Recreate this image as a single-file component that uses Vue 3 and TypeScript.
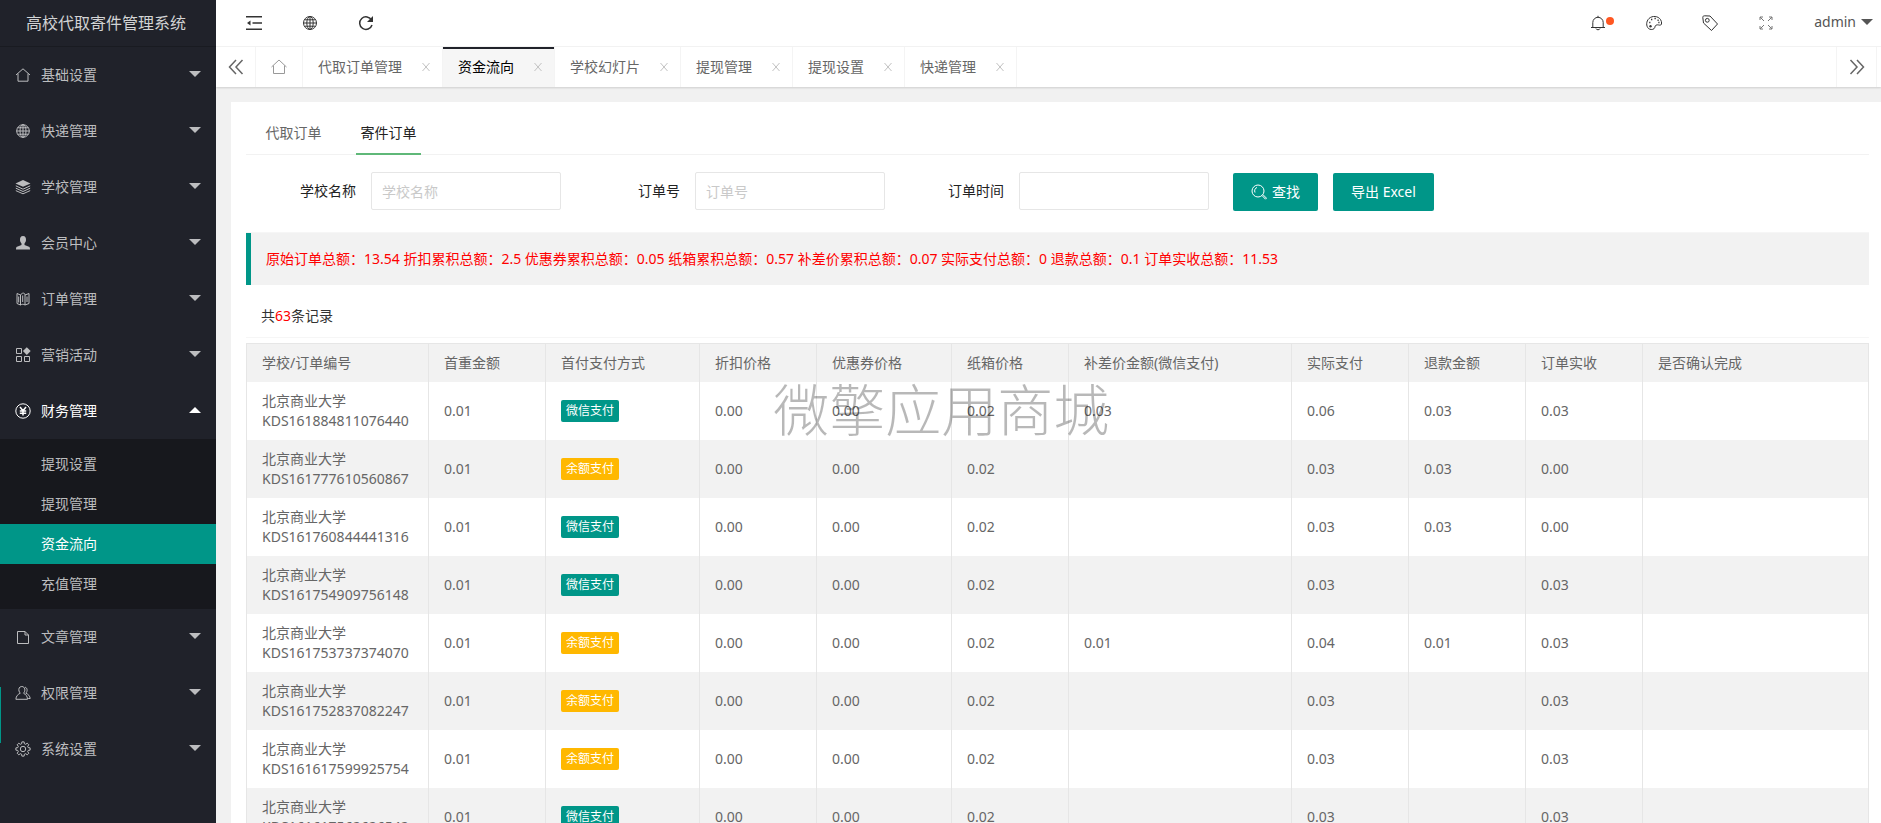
<script setup lang="ts">
import { ref } from 'vue'

interface MenuItem {
  title: string
  icon: string
  children?: string[]
}

interface Order {
  no: string
  pay: 'wechat' | 'balance'
  extra: string
  paid: string
  refund: string
  income: string
}

const menu: MenuItem[] = [
  { title: '基础设置', icon: 'home' },
  { title: '快递管理', icon: 'globe' },
  { title: '学校管理', icon: 'layers' },
  { title: '会员中心', icon: 'user' },
  { title: '订单管理', icon: 'map' },
  { title: '营销活动', icon: 'apps' },
  { title: '财务管理', icon: 'yen', children: ['提现设置', '提现管理', '资金流向', '充值管理'] },
  { title: '文章管理', icon: 'file' },
  { title: '权限管理', icon: 'friends' },
  { title: '系统设置', icon: 'gear' },
]

const tabs = ref(['代取订单管理', '资金流向', '学校幻灯片', '提现管理', '提现设置', '快递管理'])
const active = ref('资金流向')
const school = ref('')
const orderNo = ref('')
const orderTime = ref('')

function closeTab(name: string) {
  tabs.value = tabs.value.filter((t) => t !== name)
}

// Outline of an eight-tooth cog centred in a 16-unit box
const cog =
  Array.from({ length: 8 }, (_, i) =>
    [[-15, 5.400], [-9, 7.200], [9, 7.200], [15, 5.400]].map(([offset, radius]) => {
      const a = ((i * 45 + offset) * Math.PI) / 180
      return `${(8 + radius * Math.cos(a)).toFixed(2)} ${(8 + radius * Math.sin(a)).toFixed(2)}`
    }),
  )
    .flat()
    .reduce((d, p, i) => d + (i ? 'L' : 'M') + p, '') + 'Z'

const columns = [
  '学校/订单编号', '首重金额', '首付支付方式', '折扣价格', '优惠券价格', '纸箱价格',
  '补差价金额(微信支付)', '实际支付', '退款金额', '订单实收', '是否确认完成',
]

const orders: Order[] = [
  { no: 'KDS161884811076440', pay: 'wechat', extra: '0.03', paid: '0.06', refund: '0.03', income: '0.03' },
  { no: 'KDS161777610560867', pay: 'balance', extra: '', paid: '0.03', refund: '0.03', income: '0.00' },
  { no: 'KDS161760844441316', pay: 'wechat', extra: '', paid: '0.03', refund: '0.03', income: '0.00' },
  { no: 'KDS161754909756148', pay: 'wechat', extra: '', paid: '0.03', refund: '', income: '0.03' },
  { no: 'KDS161753737374070', pay: 'balance', extra: '0.01', paid: '0.04', refund: '0.01', income: '0.03' },
  { no: 'KDS161752837082247', pay: 'balance', extra: '', paid: '0.03', refund: '', income: '0.03' },
  { no: 'KDS161617599925754', pay: 'balance', extra: '', paid: '0.03', refund: '', income: '0.03' },
  { no: 'KDS161617562626542', pay: 'wechat', extra: '', paid: '0.03', refund: '', income: '0.03' },
]
</script>

<template>
  <div class="app">
    <aside class="side">
      <div class="logo">高校代取寄件管理系统</div>
      <nav>
        <div v-for="m in menu" :key="m.title" class="group">
          <a href="#" class="item" :class="{ open: m.children, marked: m.icon === 'friends' }">
            <svg class="ico" viewBox="0 0 16 16">
              <path v-if="m.icon === 'home'" d="M1 8 8 1.800 15 8M3 6.600V14.200H13V6.600" />
              <g v-else-if="m.icon === 'globe'">
                <circle cx="8" cy="8" r="6.300" /><ellipse cx="8" cy="8" rx="3" ry="6.300" />
                <path d="M8 1.500v13M1.500 8h13M2.600 4.800h10.800M2.600 11.200h10.800" />
              </g>
              <g v-else-if="m.icon === 'layers'">
                <path class="fill" d="M8 1 15.500 4.400 8 7.800.5 4.400z" />
                <path d="M.8 6.800 8 10.200 15.200 6.800M.8 9.200 8 12.500 15.200 9.200M.8 11.600 8 14.800 15.200 11.600" />
              </g>
              <path v-else-if="m.icon === 'user'" class="fill" d="M8 1C5.600 1 4.900 2.800 5 5c.1 1.700.8 2.700 1.500 3.400V10L2 11.700C1.200 12 1 13 1 14.500H15C15 13 14.800 12 14 11.700L9.500 10V8.400C10.200 7.700 10.900 6.700 11 5 11.100 2.800 10.400 1 8 1z" />
              <path v-else-if="m.icon === 'map'" d="M2 2.500 5.500 4v10L2 12.500zM10 4l4-1.500v10L10 14M5.500 4C7 1.500 10 1.500 10 4v10c-1.500-1-3-1-4.500 0M7.700 4.500v6.500M3.700 5.500v6M12 5.500v5.500" />
              <g v-else-if="m.icon === 'apps'">
                <path d="M1.500 1.500h5v5h-5zM1.500 9.500h5v5h-5zM9.500 9.500h5v5h-5z" />
                <path class="fill" d="M11.800.2 15.700 4.100 11.800 8 7.900 4.100z" />
              </g>
              <g v-else-if="m.icon === 'yen'">
                <circle cx="8" cy="8" r="7.200" />
                <path class="bold" d="M5 4l3 3.800L11 4M8 7.800V12.500M4.800 8h6.400M4.800 10.200h6.400" />
              </g>
              <path v-else-if="m.icon === 'file'" d="M2.500 2.500H10l3.500 3.500V14.500h-11zM10 2.500V6h3.500" />
              <path v-else-if="m.icon === 'friends'" d="M6.800 1.500C4 1.500 3.500 4 4 6c.3 1 .7 1.700 1.300 2.200C3 9.300 1 11 .9 14.300H12.500C12.500 11 10.500 9.300 8.500 8.200 10.800 6 10.200 1.500 6.800 1.500zM10 2.200c2.500.5 2.800 4 .8 6 2.500 1 4.200 3 4.400 5.300h-2" />
              <g v-else><path :d="cog" /><circle cx="8" cy="8" r="2.700" /></g>
            </svg>
            <span>{{ m.title }}</span>
            <i class="caret" :class="{ up: m.children }"></i>
          </a>
          <div v-if="m.children" class="subs">
            <a v-for="c in m.children" :key="c" href="#" :class="{ on: c === active }">{{ c }}</a>
          </div>
        </div>
      </nav>
    </aside>

    <div class="main">
      <header class="bar">
        <div class="tools">
          <button type="button" aria-label="收起菜单">
            <svg viewBox="0 0 16 16"><path class="mid" d="M0 1.700h16M6.500 8H16M0 14.300h16" /><path class="fill" d="M1 8 4.500 5.500v5z" /></svg>
          </button>
          <button type="button" aria-label="网站">
            <svg viewBox="0 0 16 16"><circle cx="8" cy="8" r="6.500" /><ellipse cx="8" cy="8" rx="3.200" ry="6.500" /><path d="M8 1.500v13M1.500 8h13M2.600 4.800h10.800M2.600 11.200h10.800" /></svg>
          </button>
          <button type="button" aria-label="刷新">
            <svg viewBox="0 0 16 16"><path class="mid" d="M13.600 5.300A6.300 6.300 0 1 0 14 10" /><path class="fill" d="M15 1v6H9z" /></svg>
          </button>
        </div>
        <div class="tools">
          <button type="button" aria-label="消息" class="bell">
            <svg viewBox="0 0 16 16"><path d="M1 12.500h14M2.800 12.500V7.500a5.200 5.200 0 0 1 10.400 0v5M8 2.300V.8M6 13.500c.3 1.700 3.700 1.700 4 0" /></svg>
            <i class="dot"></i>
          </button>
          <button type="button" aria-label="主题">
            <svg viewBox="0 0 16 16"><path d="M2.500 13.500C0 11 0 6.500 3 3.500 6.500.3 12 1 14.500 4.500 16 7 15.800 9.500 14.800 10c-1.500.6-3-.8-4.800.2-1.500.8-.6 2.300-2 3.500-1.500 1.200-4 1-5.500-.2z" /><circle class="fill" cx="4.500" cy="11.300" r="1.200" /><path class="mid" d="M3.200 7.500h1.200M5 4.600h1.300M8.500 3.600h1.300M11.500 5.200h1.200M12.300 7.600h1.200" /></svg>
          </button>
          <button type="button" aria-label="便签">
            <svg viewBox="0 0 16 16"><path d="M.8 2.500C.8 1.200 1.500.8 2.500.8L8 1l7.500 8L9.500 15.500 1.500 8z" /><circle cx="5.300" cy="5.300" r="1.900" /></svg>
          </button>
          <button type="button" aria-label="全屏" class="soft">
            <svg viewBox="0 0 16 16"><path d="M2 2l4 4M14 2l-4 4M2 14l4-4M14 14l-4-4M2 5V2h3M11 2h3v3M2 11v3h3M11 14h3v-3" /></svg>
          </button>
          <a href="#" class="admin">admin<i class="caret"></i></a>
        </div>
      </header>

      <div class="tabs">
        <button type="button" class="cell" aria-label="向左">
          <svg viewBox="0 0 16 16"><path class="mid" d="M8 1 1.500 8 8 15M14.500 1 8 8l6.500 7" /></svg>
        </button>
        <button type="button" class="cell home" aria-label="首页">
          <svg viewBox="0 0 16 16"><path d="M.5 8 8 1 15.500 8M2.500 6.500V14.500h11V6.500" /></svg>
        </button>
        <div v-for="t in tabs" :key="t" class="tab" :class="{ on: t === active }">
          <button type="button" class="name" @click="active = t">{{ t }}</button>
          <button type="button" class="close" :aria-label="'关闭' + t" @click="closeTab(t)">
            <svg viewBox="0 0 10 10"><path d="M1.500 1l7 8M8.500 1l-7 8" /></svg>
          </button>
        </div>
        <button type="button" class="cell next" aria-label="向右">
          <svg viewBox="0 0 16 16"><path class="mid" d="M1.500 1 8 8l-6.500 7M8 1l6.500 7L8 15" /></svg>
        </button>
      </div>

      <main class="card">
        <div class="switch">
          <a href="#">代取订单</a>
          <a href="#" class="on">寄件订单</a>
        </div>

        <form class="search" @submit.prevent>
          <div class="field">
            <label for="school">学校名称</label>
            <input id="school" v-model="school" type="text" placeholder="学校名称" />
          </div>
          <div class="field">
            <label for="order">订单号</label>
            <input id="order" v-model="orderNo" type="text" placeholder="订单号" />
          </div>
          <div class="field">
            <label for="time">订单时间</label>
            <input id="time" v-model="orderTime" type="text" />
          </div>
          <div class="actions">
            <button type="submit">
              <svg viewBox="0 0 16 16"><circle cx="7" cy="7" r="6" /><path d="M11 11.500l3.500 3.700 1-1L12 10.700M4 8.500C3 6.500 4 4 6 3.500" /></svg>
              <span>查找</span>
            </button>
            <button type="button">导出 Excel</button>
          </div>
        </form>

        <blockquote class="totals">
          原始订单总额：13.54 折扣累积总额：2.5 优惠券累积总额：0.05 纸箱累积总额：0.57 补差价累积总额：0.07 实际支付总额：0 退款总额：0.1 订单实收总额：11.53
        </blockquote>

        <div class="count">共<b>63</b>条记录</div>

        <div class="holder">
          <table>
            <colgroup>
              <col class="w-no" /><col class="w-s" /><col class="w-pay" /><col class="w-s" /><col class="w-m" />
              <col class="w-s" /><col class="w-l" /><col class="w-s" /><col class="w-s" /><col class="w-s" /><col />
            </colgroup>
            <thead>
              <tr><th v-for="c in columns" :key="c" scope="col">{{ c }}</th></tr>
            </thead>
            <tbody>
              <tr v-for="o in orders" :key="o.no">
                <td>北京商业大学<br />{{ o.no }}</td>
                <td>0.01</td>
                <td><span class="badge" :class="o.pay">{{ o.pay === 'wechat' ? '微信支付' : '余额支付' }}</span></td>
                <td>0.00</td>
                <td>0.00</td>
                <td>0.02</td>
                <td>{{ o.extra }}</td>
                <td>{{ o.paid }}</td>
                <td>{{ o.refund }}</td>
                <td>{{ o.income }}</td>
                <td></td>
              </tr>
            </tbody>
          </table>
          <div class="mark">微擎应用商城</div>
        </div>
      </main>
    </div>
  </div>
</template>

<style>
html,
body {
  margin: 0;
  overflow: hidden;
}
</style>

<style scoped>
* {
  box-sizing: border-box;
}
.app {
  display: flex;
  height: 100vh;
  overflow: hidden;
  background: #f1f1f1;
  color: #333;
  font: 14px/20px "Noto Sans", "Noto Sans CJK SC", sans-serif;
}
a {
  color: inherit;
  text-decoration: none;
}
button {
  padding: 0;
  border: 0;
  background: none;
  color: inherit;
  font: inherit;
  cursor: pointer;
}
svg {
  display: block;
  flex: none;
  width: 16px;
  height: 16px;
  fill: none;
  stroke: currentColor;
  stroke-width: 1;
}
svg .fill {
  fill: currentColor;
  stroke: none;
}
svg .mid,
svg .bold {
  stroke-width: 1.5;
}
.caret {
  flex: none;
  border: 6px solid transparent;
  border-top-color: currentColor;
  border-bottom: 0;
}
.caret.up {
  border-top: 0;
  border-bottom: 6px solid currentColor;
}

.side {
  flex: none;
  width: 216px;
  background: #20222a;
  color: #bcbdbf;
}
.logo {
  height: 47px;
  padding-right: 4px;
  border-bottom: 1px solid #191b21;
  color: #d2d3d4;
  font-size: 16px;
  line-height: 46px;
  text-align: center;
}
.item {
  position: relative;
  display: flex;
  align-items: center;
  height: 56px;
  padding: 0 15px;
}
.item .ico {
  margin-right: 10px;
}
.item .caret {
  margin: 0 0 2px auto;
}
.item.open {
  color: #fff;
}
.item.marked::before {
  position: absolute;
  top: 22px;
  left: 0;
  width: 1px;
  height: 56px;
  background: #009688;
  content: "";
}
.subs {
  padding: 5px 0;
  background: #17181d;
}
.subs a {
  display: block;
  padding-left: 41px;
  line-height: 40px;
}
.subs .on {
  background: #009688;
  color: #fff;
}

.main {
  display: flex;
  flex: 1;
  flex-direction: column;
  min-width: 0;
}
.bar {
  display: flex;
  flex: none;
  justify-content: space-between;
  height: 47px;
  padding: 0 8px 0 10px;
  border-bottom: 1px solid #f4f4f4;
  background: #fff;
}
.tools {
  display: flex;
}
.tools button {
  display: flex;
  align-items: center;
  justify-content: center;
  width: 56px;
}
.tools .soft {
  color: #777;
}
.bell {
  position: relative;
}
.dot {
  position: absolute;
  top: 17px;
  left: 36px;
  width: 8px;
  height: 8px;
  border-radius: 50%;
  background: #ff5722;
}
.admin {
  display: flex;
  gap: 5px;
  align-items: center;
  padding: 0 0 2px 20px;
  color: #555;
}

.tabs {
  display: flex;
  flex: none;
  height: 40px;
  padding-right: 4px;
  background: #fff;
  box-shadow: 0 1px 2px rgba(0, 0, 0, 0.15);
  color: #666;
}
.cell {
  display: flex;
  align-items: center;
  justify-content: center;
  width: 40px;
  border-right: 1px solid #f4f4f4;
}
.home {
  width: 47px;
  color: #999;
}
.next {
  width: 41px;
  margin-left: auto;
  border-left: 1px solid #f4f4f4;
}
.tab {
  display: flex;
  gap: 19px;
  align-items: center;
  padding: 0 11px 0 15px;
  border-right: 1px solid #f4f4f4;
}
.tab.on {
  background: #f6f6f6;
  box-shadow: inset 0 2px #20222a;
  color: #000;
}
.close {
  color: #c2c2c2;
}
.close svg {
  width: 10px;
  height: 10px;
}

.card {
  margin: 15px 0 0 15px;
  padding: 12px 12px 0 15px;
  background: #fff;
}
.switch {
  display: flex;
  height: 41px;
  border-bottom: 1px solid #f2f2f2;
  color: #666;
}
.switch a {
  width: 65px;
  height: 41px;
  margin: 0 15px;
  line-height: 38px;
  text-align: center;
}
.switch .on {
  border-bottom: 2px solid #5fb878;
  color: #222;
}
.search {
  display: flex;
  flex-wrap: wrap;
  gap: 24px;
  min-height: 78px;
  padding: 17px 15px 0;
  border-bottom: 1px solid #f6f6f6;
}
.field {
  display: flex;
}
.field label {
  width: 110px;
  padding: 9px 15px;
  color: #222;
  text-align: right;
}
.field input {
  width: 190px;
  height: 38px;
  padding: 0 10px;
  border: 1px solid #e6e6e6;
  border-radius: 2px;
  outline: 0;
  font: inherit;
}
.field input::placeholder {
  color: #c9c9c9;
}
.actions {
  display: flex;
  gap: 15px;
  padding-top: 1px;
}
.actions button {
  display: flex;
  gap: 5px;
  align-items: center;
  height: 38px;
  padding: 0 18px;
  border-radius: 2px;
  background: #009688;
  color: #fff;
}
.totals {
  margin: 0;
  padding: 16px 15px;
  border-left: 5px solid #009688;
  background: #f2f2f2;
  color: #f00;
}
.count {
  height: 53px;
  padding: 21px 15px 0;
  border-bottom: 1px solid #f6f6f6;
}
.count b {
  color: #f00;
  font-weight: 400;
}
.holder {
  position: relative;
  margin-top: 5px;
}
table {
  width: 100%;
  border: 1px solid #e6e6e6;
  border-collapse: collapse;
  color: #666;
  table-layout: fixed;
}
.w-no {
  width: 182px;
}
.w-s {
  width: 117px;
}
.w-m {
  width: 135px;
}
.w-pay {
  width: 154px;
}
.w-l {
  width: 223px;
}
th,
td {
  padding: 9px 15px;
  border-right: 1px solid #e6e6e6;
  font-weight: 400;
  text-align: left;
  white-space: nowrap;
}
th,
tbody tr:nth-child(even) {
  background: #f2f2f2;
}
.badge {
  display: inline-block;
  padding: 0 5px;
  border-radius: 2px;
  color: #fff;
  font-size: 12px;
  line-height: 22px;
  vertical-align: middle;
}
.wechat {
  background: #009688;
}
.balance {
  background: #ffb800;
}
.mark {
  position: absolute;
  top: 38px;
  left: 0;
  width: 100%;
  padding-left: 32%;
  text-indent: 8px;
  color: rgba(0, 0, 0, 0.28);
  font-size: 56px;
  font-weight: 300;
  line-height: 56px;
  pointer-events: none;
}
</style>
